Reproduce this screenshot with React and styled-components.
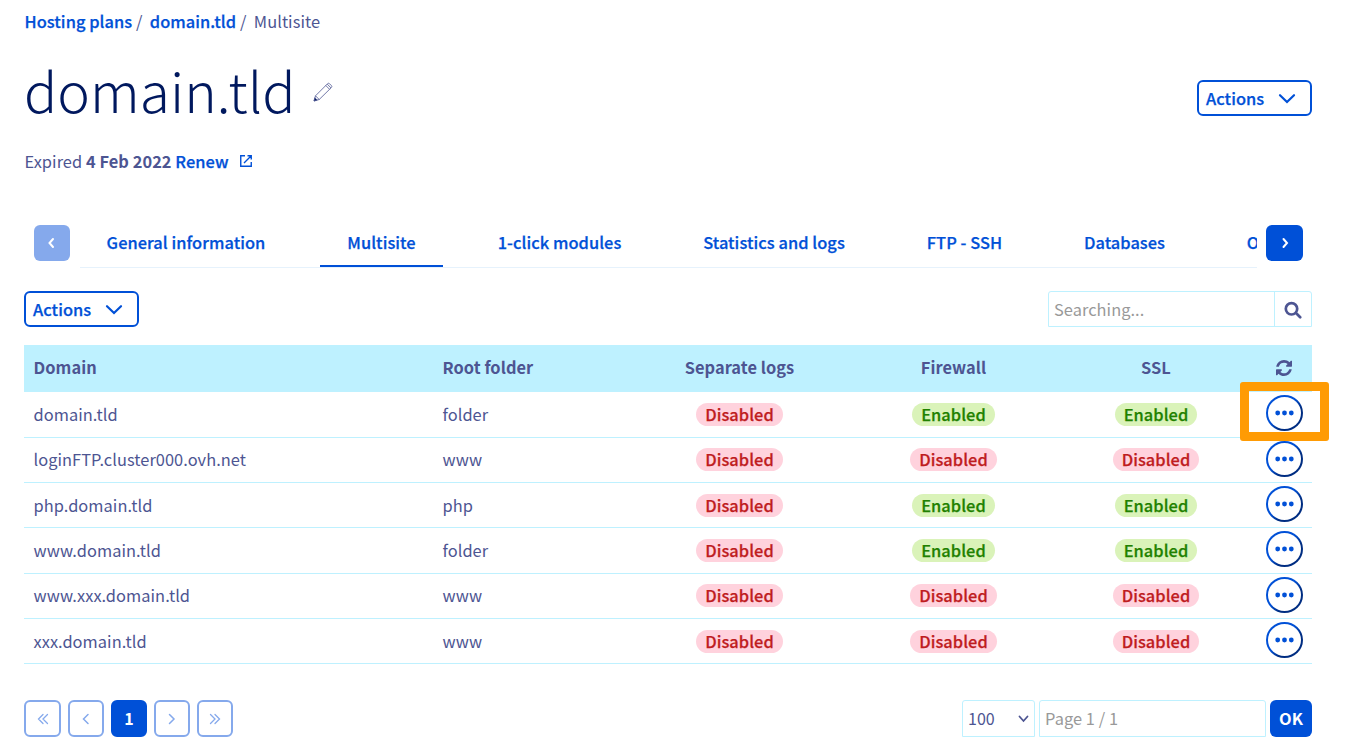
import React from "react";
import styled, { createGlobalStyle, css } from "styled-components";

const blue = "#0050d7";
const navy = "#00185e";
const text = "#4d5592";
const pale = "#bef1ff";
const faded = "#85a9ec";

const Global = createGlobalStyle`
  *, *::before, *::after { box-sizing: border-box; }
  body {
    margin: 0;
    background: #fff;
    color: ${text};
    font: 400 16.4px/24px "Noto Sans CJK SC", "Noto Sans", sans-serif;
    letter-spacing: 0.05px;
  }
  button, input, select { font: inherit; letter-spacing: inherit; }
  svg { display: block; flex: none; }
`;

const semibold = css`
  font-weight: 500;
  -webkit-text-stroke: 0.25px currentColor;
`;

const Page = styled.main`
  width: 1351px;
  height: 756px;
  padding: 9px 39px 0 24px;
  overflow: hidden;
`;

const Breadcrumb = styled.nav`
  display: flex;
  height: 24px;
  padding-left: 0.5px;
  white-space: pre;
`;

const Link = styled.a`
  ${semibold}
  color: ${blue};
  text-decoration: none;
`;

const Header = styled.header`
  display: flex;
  align-items: flex-start;
  justify-content: space-between;
  height: 116px;
`;

const TitleGroup = styled.div`
  display: flex;
  align-items: center;
  gap: 17px;
  padding-top: 16px;
  svg { margin-top: 5px; }
`;

const Title = styled.h1`
  margin: 0;
  color: ${navy};
  font-size: 55px;
  font-weight: 300;
  line-height: 80px;
`;

const HeaderActions = styled.div`
  padding-top: 47px;
`;

const OutlineButton = styled.button`
  ${semibold}
  display: flex;
  align-items: center;
  gap: 14px;
  width: 115px;
  height: 36px;
  padding: 0 0 ${(p) => (p.$raised ? 1 : 0)}px 7px;
  border: 2px solid ${blue};
  border-radius: 6px;
  background: #fff;
  color: ${blue};
  svg { margin-top: ${(p) => (p.$raised ? 3 : 2)}px; }
`;

const Expiry = styled.div`
  display: flex;
  align-items: center;
  height: 24px;
  padding-left: 0.5px;
  white-space: pre;
  svg { margin: -1px 0 0 10px; }
`;

const Strong = styled.b`
  font-weight: 700;
`;

const TabBar = styled.div`
  display: flex;
  align-items: flex-start;
  height: 49px;
  margin-top: 46px;
  padding: 0 9px 0 10px;
`;

const ScrollButton = styled.button`
  display: grid;
  place-items: center;
  flex: none;
  width: ${(p) => (p.$disabled ? 36 : 37)}px;
  height: 36px;
  margin-top: 6px;
  padding: 0;
  border: 0;
  border-radius: 6px;
  background: ${(p) => (p.$disabled ? faded : blue)};
  color: #fff;
`;

const Tabs = styled.div`
  display: flex;
  flex: 1;
  gap: 28px;
  height: 49px;
  margin: 0 9px 0 10px;
  overflow: hidden;
  border-bottom: 1px solid #e6f2fc;
`;

const Tab = styled.a`
  ${semibold}
  flex: none;
  width: ${(p) => p.$width}px;
  height: 48px;
  border-bottom: 2px solid ${(p) => (p.$active ? blue : "transparent")};
  color: ${blue};
  line-height: 47px;
  text-align: center;
  white-space: nowrap;
`;

const Toolbar = styled.div`
  display: flex;
  justify-content: space-between;
  height: 54px;
  margin-top: 23px;
`;

const field = css`
  border: 1px solid ${pale};
  background: #fff;
`;

const Search = styled.div`
  ${field}
  display: flex;
  width: 264px;
  height: 36px;
  border-radius: 3px 3px 0 0;
`;

const Input = styled.input`
  flex: 1;
  min-width: 0;
  padding: 0 5px;
  border: 0;
  background: transparent;
  color: ${text};
  &::placeholder { color: #999; opacity: 1; }
`;

const SearchButton = styled.button`
  display: grid;
  place-items: center;
  width: 37px;
  padding: 0;
  border: 0;
  border-left: 1px solid ${pale};
  background: none;
  color: ${text};
  svg { margin-top: 1px; }
`;

const Table = styled.div`
  width: 1288px;
  height: 319px;
`;

const Row = styled.div`
  display: grid;
  grid-template-columns: 409px 194px 225px 203px 202px 55px;
  align-items: center;
  height: 45.333px;
  border-bottom: 1px solid ${pale};
`;

const Cell = styled.div`
  display: flex;
  justify-content: ${(p) => (p.$center ? "center" : "flex-start")};
  padding: ${(p) => (p.$center ? "0" : "0 0 1.3px 9.5px")};
`;

const HeadRow = styled(Row)`
  height: 47.47px;
  padding-bottom: 3px;
  border: 0;
  background: ${pale};
  font-weight: 700;
  ${Cell} { padding-bottom: 0; }
  svg { margin: 1px 1px 0 0; }
`;

const Badge = styled.span`
  ${semibold}
  height: 23px;
  padding: 0 9px;
  border-radius: 12px;
  background: ${(p) => (p.$on ? "#daf3b9" : "#ffd2dd")};
  color: ${(p) => (p.$on ? "#1f8100" : "#bf1d1f")};
  line-height: 23px;
`;

const MoreCell = styled(Cell)`
  position: relative;
  align-items: center;
  height: 100%;
`;

const MoreButton = styled.button`
  display: grid;
  place-items: center;
  width: 37px;
  height: 36px;
  margin-top: -2.6px;
  padding: 0;
  border: 2px solid transparent;
  border-radius: 50%;
  background: linear-gradient(#fff, #fff) padding-box,
    linear-gradient(135deg, ${blue} 45%, #002d82 65%) border-box;
  color: ${blue};
`;

const Highlight = styled.span`
  position: absolute;
  top: -10px;
  left: -17px;
  z-index: 1;
  width: 89px;
  height: 59px;
  border: 9px solid #ff9b04;
  border-radius: 3px;
`;

const Footer = styled.footer`
  display: flex;
  justify-content: space-between;
  height: 37px;
  margin-top: 36px;
`;

const Pager = styled.div`
  display: flex;
  gap: 7px;
`;

const PageButton = styled.button`
  display: grid;
  place-items: center;
  width: 36px;
  height: 37px;
  padding: 0 0 ${(p) => (p.$current ? 1 : 0)}px;
  border: 2px solid ${(p) => (p.$current ? blue : faded)};
  border-radius: 6px;
  background: ${(p) => (p.$current ? blue : "#fff")};
  color: ${(p) => (p.$current ? "#fff" : faded)};
  font-size: 16px;
  font-weight: 700;
  &:first-child { width: 37px; }
`;

const PageForm = styled.div`
  display: flex;
  gap: 4px;
`;

const SizeSelect = styled.div`
  ${field}
  display: flex;
  align-items: center;
  justify-content: space-between;
  width: 73px;
  padding: 0 5px 1px;
  border-radius: 3px 3px 0 0;
  font-size: 16px;
  svg { margin-top: 1px; }
`;

const PageField = styled.div`
  ${field}
  display: flex;
  width: 227px;
  padding-bottom: 1px;
  border-radius: 3px 3px 0 0;
`;

const OkButton = styled.button`
  width: 42px;
  padding: 0 0 2px;
  border: 0;
  border-radius: 6px;
  background: ${blue};
  color: #fff;
  font-weight: 700;
`;

const Stroke = ({ w, h, d, sw = 2, cap = "round" }) => (
  <svg width={w} height={h} viewBox={`0 0 ${w} ${h}`} fill="none" stroke="currentColor" strokeWidth={sw} strokeLinecap={cap} strokeLinejoin="miter">
    <path d={d} />
  </svg>
);

const Pencil = () => (
  <svg width="20" height="20" viewBox="0 0 20 20" fill="none" stroke={text} strokeWidth="0.8" strokeLinejoin="round">
    <path d="M1 19l1.500-5.200L14.600 1.700c.6-.6 1.300-.6 1.900 0l1.900 1.900c.6.6.6 1.300 0 1.900L6.200 17.500z" />
    <path d="M2.500 13.800l3.700 3.700M12.800 3.500l3.800 3.800M14.200 2.100L18 5.900" />
    <path d="M1 19l.9-3.200 2.300 2.300z" fill={navy} />
  </svg>
);

const External = () => (
  <Stroke w={14} h={14} sw={1.400} cap="butt" d="M6 1.750H1.750v10.500h10.500V8M8.500 1.750h3.750V5.500M12 2L5 9" />
);

const Magnifier = () => <Stroke w={18} h={18} sw={2.700} d="M13.200 7.800a5.700 5.700 0 1 1-11.400 0a5.700 5.700 0 1 1 11.400 0M12 12l4.200 4.200" />;

const Refresh = () => (
  <svg width="16" height="16" viewBox="0 0 1536 1536" fill="currentColor">
    <path d="M1511 928q0 5-1 7-64 268-268 434.500T764 1536q-146 0-282.500-55T238 1324l-129 129q-19 19-45 19t-45-19-19-45V960q0-26 19-45t45-19h448q26 0 45 19t19 45-19 45l-137 137q71 66 161 102t187 36q134 0 250-65t186-179q11-17 53-117 8-23 30-23h192q13 0 22.500 9.500t9.500 22.500zm25-800v448q0 26-19 45t-45 19h-448q-26 0-45-19t-19-45 19-45l138-138Q969 256 768 256q-134 0-250 65T332 500q-11 17-53 117-8 23-30 23H50q-13 0-22.500-9.500T18 608v-7q65-268 270-434.500T768 0q146 0 284 55.500T1297 212l130-129q19-19 45-19t45 19 19 45z" />
  </svg>
);

const Dots = () => (
  <svg width="19" height="6" viewBox="0 0 19 6" fill="currentColor">
    <circle cx="2.700" cy="3" r="2.400" />
    <circle cx="9.500" cy="3" r="2.400" />
    <circle cx="16.300" cy="3" r="2.400" />
  </svg>
);

const ActionsButton = ({ raised }) => (
  <OutlineButton $raised={raised}>
    <span>Actions</span>
    <Stroke w={18} h={12} sw={2.200} d="M2 2.200l7 6.800l7-6.800" />
  </OutlineButton>
);

const tabs = [
  ["General information", 211],
  ["Multisite", 123],
  ["1-click modules", 177],
  ["Statistics and logs", 196],
  ["FTP - SSH", 129],
  ["Databases", 135],
  ["O", 66],
];

const rows = [
  ["domain.tld", "folder", false, true, true],
  ["loginFTP.cluster000.ovh.net", "www", false, false, false],
  ["php.domain.tld", "php", false, true, true],
  ["www.domain.tld", "folder", false, true, true],
  ["www.xxx.domain.tld", "www", false, false, false],
  ["xxx.domain.tld", "www", false, false, false],
];

export default function App() {
  return (
    <>
      <Global />
      <Page>
        <Breadcrumb>
          <Link>Hosting plans</Link>
          <span>{" /  "}</span>
          <Link>domain.tld</Link>
          <span>{" /  Multisite"}</span>
        </Breadcrumb>
        <Header>
          <TitleGroup>
            <Title>domain.tld</Title>
            <Pencil />
          </TitleGroup>
          <HeaderActions>
            <ActionsButton />
          </HeaderActions>
        </Header>
        <Expiry>
          <span>Expired </span>
          <Strong>4 Feb 2022 </Strong>
          <Link>Renew</Link>
          <Link as="span"><External /></Link>
        </Expiry>
        <TabBar>
          <ScrollButton $disabled>
            <Stroke w={8} h={12} d="M5 2L1.500 6L5 10" />
          </ScrollButton>
          <Tabs>
            {tabs.map(([label, width], i) => (
              <Tab key={label} $width={i === 0 ? width + 1 : width} $active={label === "Multisite"}>{label}</Tab>
            ))}
          </Tabs>
          <ScrollButton>
            <Stroke w={8} h={12} d="M2.500 2l3.500 4L2.500 10" />
          </ScrollButton>
        </TabBar>
        <Toolbar>
          <ActionsButton raised />
          <Search>
            <Input placeholder="Searching..." />
            <SearchButton><Magnifier /></SearchButton>
          </Search>
        </Toolbar>
        <Table>
          <HeadRow>
            <Cell>Domain</Cell>
            <Cell>Root folder</Cell>
            <Cell $center>Separate logs</Cell>
            <Cell $center>Firewall</Cell>
            <Cell $center>SSL</Cell>
            <Cell $center><Refresh /></Cell>
          </HeadRow>
          {rows.map(([domain, folder, ...states], i) => (
            <Row key={domain}>
              <Cell>{domain}</Cell>
              <Cell>{folder}</Cell>
              {states.map((on, j) => (
                <Cell key={j} $center>
                  <Badge $on={on}>{on ? "Enabled" : "Disabled"}</Badge>
                </Cell>
              ))}
              <MoreCell $center>
                <MoreButton><Dots /></MoreButton>
                {i === 0 && <Highlight />}
              </MoreCell>
            </Row>
          ))}
        </Table>
        <Footer>
          <Pager>
            <PageButton><Stroke w={12} h={12} sw={1.300} d="M6 1.500L1.500 6L6 10.500M10.500 1.500L6 6l4.500 4.500" /></PageButton>
            <PageButton><Stroke w={8} h={12} sw={1.500} d="M6 1.500L1.500 6L6 10.500" /></PageButton>
            <PageButton $current>1</PageButton>
            <PageButton><Stroke w={8} h={12} sw={1.500} d="M1.500 1.500L6 6L1.500 10.500" /></PageButton>
            <PageButton><Stroke w={12} h={12} sw={1.300} d="M1.500 1.500L6 6l-4.500 4.500M6 1.500L10.500 6L6 10.500" /></PageButton>
          </Pager>
          <PageForm>
            <SizeSelect>
              <span>100</span>
              <Stroke w={11} h={8} sw={1.800} d="M1.500 1.500l4 4.500l4-4.500" />
            </SizeSelect>
            <PageField><Input placeholder="Page 1 / 1" /></PageField>
            <OkButton>OK</OkButton>
          </PageForm>
        </Footer>
      </Page>
    </>
  );
}
